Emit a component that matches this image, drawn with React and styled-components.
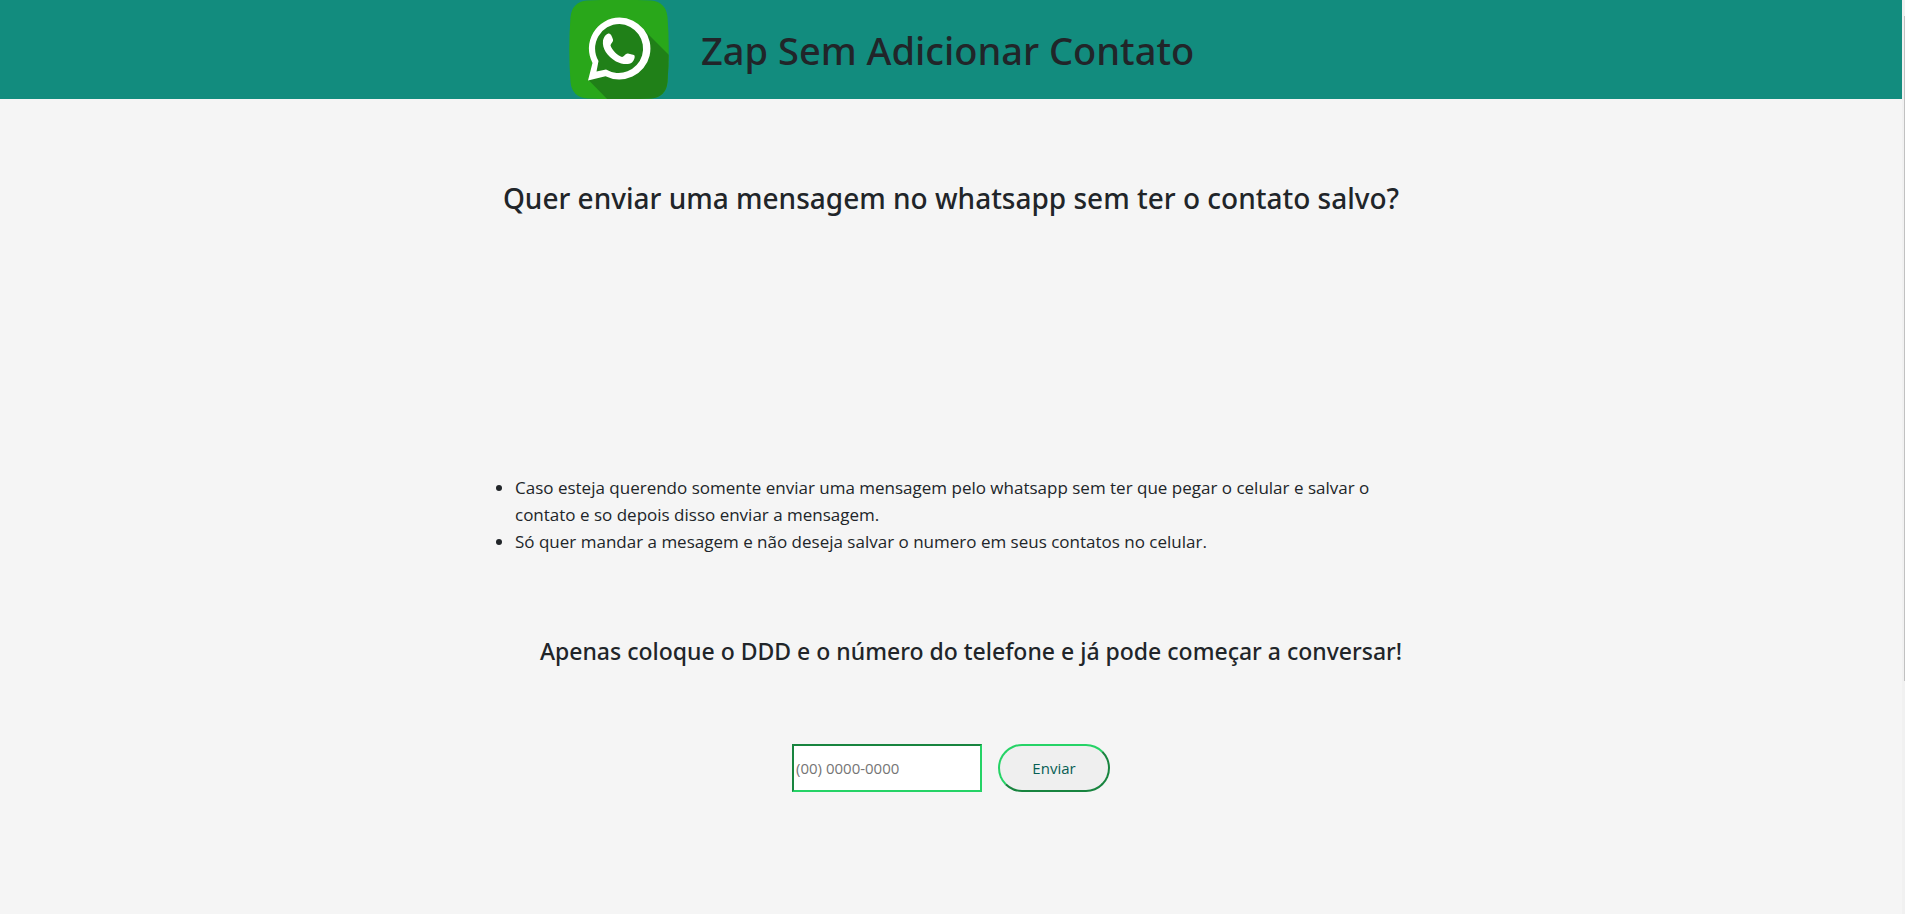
import React, { useState } from "react";
import styled, { createGlobalStyle } from "styled-components";

const GlobalStyle = createGlobalStyle`
  *, *::before, *::after {
    box-sizing: border-box;
  }
  body {
    margin: 0;
    background: #f5f5f5;
    color: #212529;
    font-family: "Segoe UI", "Open Sans", "Noto Sans", sans-serif;
    font-size: 17px;
    line-height: 27px;
  }
  h1, h2, h3 {
    margin: 0;
    font-family: "Segoe UI", "Noto Sans", sans-serif;
    font-weight: 500;
  }
`;

const Page = styled.div`
  display: flex;
  min-height: 100vh;
`;

const Content = styled.div`
  flex: 1;
  min-width: 0;
`;

const ScrollTrack = styled.div`
  width: 3px;
  padding: 16px 0 0 2px;
  background: #f1f1f1;
`;

const ScrollThumb = styled.div`
  height: 665px;
  background: #c1c1c1;
`;

const Header = styled.header`
  background: #128c7e;
`;

const Brand = styled.div`
  display: flex;
  align-items: center;
  gap: 32px;
  max-width: 764px;
  margin: 0 auto;
`;

const Logo = styled.svg`
  display: block;
  flex: none;
  width: 100px;
  height: 99px;
`;

const Heading = styled.h1`
  font-size: 38px;
  line-height: 48px;
`;

const Main = styled.main`
  display: flex;
  flex-direction: column;
  align-items: center;
  padding-top: 79px;
`;

const Question = styled.h2`
  font-size: 28px;
  line-height: 40px;
`;

const Reasons = styled.ul`
  width: 100%;
  max-width: 936px;
  margin: 256px 0 80px;
  padding: 0 32px;
`;

const Hint = styled.h3`
  padding-left: 40px;
  font-size: 23px;
  line-height: 32px;
`;

const Form = styled.form`
  display: flex;
  gap: 16px;
  margin-top: 77px;
`;

const PhoneInput = styled.input`
  width: 190px;
  height: 48px;
  padding: 1px 2px;
  border: 2px solid;
  border-color: #18843f #25d366 #25d366 #18843f;
  background: #fff;
  color: #212529;
  font: inherit;
  font-size: 15px;

  &::placeholder {
    color: #757575;
    opacity: 1;
  }
`;

const SendButton = styled.button`
  width: 112px;
  height: 48px;
  border: 2px solid;
  border-color: #25d366 #18843f #18843f #25d366;
  border-radius: 24px;
  background: #efefef;
  color: #075e54;
  font: inherit;
  font-size: 15px;
  cursor: pointer;
`;

function WhatsappLogo() {
  return (
    <Logo viewBox="0 0 100 99" aria-hidden="true">
      <defs>
        <clipPath id="tile">
          <path d="M18 0.5Q50 -1 82 0.5Q97 2 98.5 17Q101 49 98.5 82Q97 97 82 98.5Q50 100 18 98.5Q3 97 1.5 82Q-1 49 1.5 17Q3 2 18 0.5Z" />
        </clipPath>
      </defs>
      <g clipPath="url(#tile)">
        <rect width="100" height="99" fill="#29a71a" />
        <path d="M72 27L104 59V104H43L19.5 80L50 50Z" fill="#208018" />
        <path
          d="M50.5 17.5A31 31 0 1 1 36.5 76.2L19 80.5L23.5 63A31 31 0 0 1 50.5 17.5Z"
          fill="#fff"
        />
        <path
          d="M50.5 24A24.5 24.5 0 1 1 37 69.5L27.5 71.5L29.5 61A24.5 24.5 0 0 1 50.5 24Z"
          fill="#208018"
        />
        <path
          d="M40 33.5C41.5 33.5 42.8 35.5 44 39.5C44.5 42 42 43 41.5 45.5C43 50 48.5 55.5 53 57C55.5 56.5 56.5 53 59 53.5L65 55C66.5 56 65.5 60 63 62.5C59.5 65 53 64.5 47 61.5C38 56 33 48.5 34 40.5C35 36 38 33.5 40 33.5Z"
          fill="#fff"
        />
      </g>
    </Logo>
  );
}

export default function App() {
  const [phone, setPhone] = useState("");

  return (
    <>
      <GlobalStyle />
      <Page>
        <Content>
          <Header>
            <Brand>
              <WhatsappLogo />
              <Heading>Zap Sem Adicionar Contato</Heading>
            </Brand>
          </Header>
          <Main>
            <Question>Quer enviar uma mensagem no whatsapp sem ter o contato salvo?</Question>
            <Reasons>
              <li>
                Caso esteja querendo somente enviar uma mensagem pelo whatsapp sem ter que pegar o
                celular e salvar o contato e so depois disso enviar a mensagem.
              </li>
              <li>
                Só quer mandar a mesagem e não deseja salvar o numero em seus contatos no celular.
              </li>
            </Reasons>
            <Hint id="hint">
              Apenas coloque o DDD e o número do telefone e já pode começar a conversar!
            </Hint>
            <Form onSubmit={(event) => event.preventDefault()}>
              <PhoneInput
                type="tel"
                aria-labelledby="hint"
                placeholder="(00) 0000-0000"
                value={phone}
                onChange={(event) => setPhone(event.target.value)}
              />
              <SendButton type="submit">Enviar</SendButton>
            </Form>
          </Main>
        </Content>
        <ScrollTrack aria-hidden="true">
          <ScrollThumb />
        </ScrollTrack>
      </Page>
    </>
  );
}
